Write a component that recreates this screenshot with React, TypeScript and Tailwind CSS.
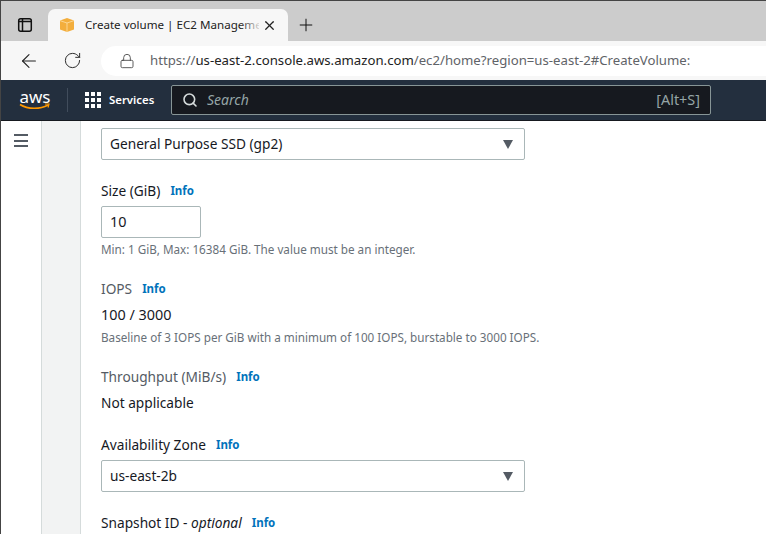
import React from 'react';
import { ArrowLeft, Lock, Plus, RotateCw, Search, X } from 'lucide-react';

const body = { fontFamily: '"Noto Sans", "Open Sans", sans-serif' };

function Info() {
    return <span className="text-[11.5px] font-bold text-[#0073bb]">Info</span>;
}

function Label({ children, dim }: { children: React.ReactNode; dim?: boolean }) {
    return (
        <div className={`flex items-center gap-[10px] text-[13.7px] leading-[18px] ${dim ? 'text-[#545b64]' : 'text-[#16191f]'}`}>
            <span>{children}</span>
            <Info />
        </div>
    );
}

function Select({ value }: { value: string }) {
    return (
        <div className="flex h-[32px] w-[424px] items-center justify-between rounded-[2px] border border-[#aab7b8] pl-[8px] pr-[11px] text-[13.7px] text-[#16191f]">
            <span>{value}</span>
            <span className="h-0 w-0 border-x-[5px] border-t-[9px] border-x-transparent border-t-[#545b64]" />
        </div>
    );
}

function Hint({ children }: { children: React.ReactNode }) {
    return <p className="text-[11.7px] leading-[16px] text-[#687078]">{children}</p>;
}

export default function App() {
    return (
        <div className="flex h-[534px] w-[766px] flex-col overflow-hidden border-l border-t border-[#444] bg-white" style={body}>
            {/* tab strip */}
            <div className="flex h-[40px] items-end bg-[#cccccc]">
                <div className="flex h-[32px] w-[47px] items-center justify-center pb-[1px]">
                    <svg width="16" height="16" viewBox="0 0 16 16" fill="none" stroke="#111" strokeWidth="1.5">
                        <rect x="1.7" y="1.7" width="12.6" height="12.6" rx="2" />
                        <path d="M5.5 2v12M2 4.6h12" />
                    </svg>
                </div>
                <div className="relative flex h-[32px] w-[240px] items-center rounded-t-[7px] bg-[#f7f7f7] pl-[11px] pr-[11px]">
                    <svg width="16" height="16" viewBox="0 0 16 16" className="shrink-0">
                        <path d="M8 1 1 3.6v9L8 15l7-2.4v-9z" fill="#f3ae3d" />
                        <path d="M1 3.6 8 6l7-2.4M8 6v9" fill="none" stroke="#fde0a8" strokeWidth="0.8" />
                    </svg>
                    <span className="ml-[10px] w-[174px] overflow-hidden whitespace-nowrap text-[11.6px] text-[#222]">Create volume | EC2 Management</span>
                    <span className="absolute left-[192px] top-0 h-full w-[22px] bg-gradient-to-r from-transparent to-[#f7f7f7]" />
                    <X size={15} strokeWidth={2} className="ml-[3px] shrink-0 text-[#222]" />
                </div>
                <div className="flex h-[32px] w-[36px] items-center justify-center">
                    <Plus size={20} strokeWidth={1.2} className="text-[#111]" />
                </div>
            </div>

            {/* address bar */}
            <div className="flex h-[39px] items-center bg-[#f7f7f7]">
                <div className="flex w-[100px] items-center">
                    <ArrowLeft size={22} strokeWidth={1.2} className="ml-[17px] text-[#222]" />
                    <RotateCw size={19} strokeWidth={1.2} className="ml-[23px] text-[#222]" />
                </div>
                <div className="flex h-[30px] flex-1 items-center rounded-l-[15px] bg-white pl-[18px]">
                    <Lock size={16} strokeWidth={1.3} className="text-[#444]" />
                    <span className="ml-[15px] whitespace-nowrap text-[13.2px] text-[#5f6368]">
                        https://<span className="text-[#222]">us-east-2.console.aws.amazon.com</span>/ec2/home?region=us-east-2#CreateVolume:
                    </span>
                </div>
            </div>

            {/* aws console nav */}
            <div className="flex h-[40px] items-center bg-[#232f3e]">
                <div className="ml-[18px] flex w-[32px] flex-col items-center">
                    <span className="text-[17px] leading-[13px] text-white">aws</span>
                    <svg width="32" height="8" viewBox="0 0 32 8" fill="none">
                        <path d="M1 1.5c8 5 20 5 28 .5" stroke="#ff9900" strokeWidth="1.6" />
                        <path d="M26 1h4l-1 3.5" stroke="#ff9900" strokeWidth="1.2" />
                    </svg>
                </div>
                <div className="ml-[16px] h-[24px] w-px bg-[#414d5c]" />
                <div className="ml-[17px] grid grid-cols-3 gap-[2px]">
                    {Array.from({ length: 9 }).map((_, i) => (
                        <span key={i} className="h-[4px] w-[4px] bg-white" />
                    ))}
                </div>
                <span className="ml-[8px] w-[46px] whitespace-nowrap text-[11.4px] font-semibold text-white">Services</span>
                <div className="ml-[16px] flex h-[30px] w-[540px] items-center rounded-[2px] border border-[#879596] bg-[#16191f] pl-[10px] pr-[10px]">
                    <Search size={16} strokeWidth={2.4} className="text-[#d5dbdb]" />
                    <span className="ml-[9px] pb-[1px] text-[14px] italic text-[#95a5a6]">Search</span>
                    <span className="ml-auto pb-[1px] text-[14.4px] text-[#95a5a6]">[Alt+S]</span>
                </div>
            </div>

            {/* page */}
            <div className="flex flex-1 border-t border-[#16191f]">
                <div className="flex w-[41px] justify-center border-r border-[#d5dbdb] pt-[13px]">
                    <div className="flex h-[13px] w-[14px] flex-col justify-between">
                        <span className="h-[2px] bg-[#545b64]" />
                        <span className="h-[2px] bg-[#545b64]" />
                        <span className="h-[2px] bg-[#545b64]" />
                    </div>
                </div>
                <div className="w-[39px] border-r border-[#d5dbdb] bg-[#f2f3f3]" />
                <div className="flex flex-1 flex-col pl-[20px] pt-[7px]">
                    <Select value="General Purpose SSD (gp2)" />

                    <div className="mt-[22px]">
                        <Label>Size (GiB)</Label>
                    </div>
                    <div className="mt-[6px] flex h-[32px] w-[100px] items-center rounded-[2px] border border-[#aab7b8] pl-[8px] text-[14.4px] text-[#16191f]">10</div>
                    <div className="mt-[3px]"><Hint>Min: 1 GiB, Max: 16384 GiB. The value must be an integer.</Hint></div>

                    <div className="mt-[23px]"><Label dim>IOPS</Label></div>
                    <div className="mt-[8px] text-[14.4px] leading-[18px] text-[#16191f]">100 / 3000</div>
                    <div className="mt-[5px]"><Hint>Baseline of 3 IOPS per GiB with a minimum of 100 IOPS, burstable to 3000 IOPS.</Hint></div>

                    <div className="mt-[23px]"><Label dim>Throughput (MiB/s)</Label></div>
                    <div className="mt-[8px] text-[13.7px] leading-[18px] text-[#16191f]">Not applicable</div>

                    <div className="mt-[24px]"><Label>Availability Zone</Label></div>
                    <div className="mt-[6px]"><Select value="us-east-2b" /></div>

                    <div className="mt-[22px]">
                        <Label>Snapshot ID - <i>optional</i></Label>
                    </div>
                </div>
            </div>
        </div>
    );
}
